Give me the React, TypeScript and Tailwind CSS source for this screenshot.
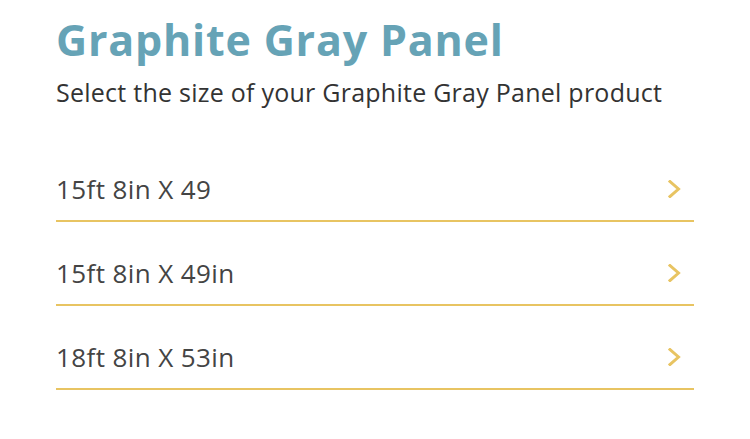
const sizes = ['15ft 8in X 49', '15ft 8in X 49in', '18ft 8in X 53in'];

function Chevron() {
  return (
    <svg width="14" height="18" viewBox="0 0 14 18" fill="none" className="mr-[12px]">
      <polyline
        points="2,1.5 10.5,9 2,16.5"
        stroke="#e8c462"
        strokeWidth="3"
        strokeLinecap="square"
        strokeLinejoin="miter"
      />
    </svg>
  );
}

export default function App() {
  return (
    <div className="w-[750px] h-[439px] bg-white px-[56px] pt-[14px] font-['Open_Sans',sans-serif]">
      <h1 className="text-[43px] leading-[52px] font-bold text-[#66a3b6] tracking-[0.8px]">
        Graphite Gray Panel
      </h1>
      <p className="mt-[10px] text-[25px] leading-[32px] text-[#333] tracking-[0.25px]">
        Select the size of your Graphite Gray Panel product
      </p>

      <ul className="mt-[30px] w-[638px]">
        {sizes.map((size) => (
          <li
            key={size}
            className="flex items-center justify-between h-[84px] pt-[20px] border-b-2 border-[#e8c462]"
          >
            <span className="text-[26px] text-[#444] tracking-[0.4px]">{size}</span>
            <Chevron />
          </li>
        ))}
      </ul>
    </div>
  );
}
